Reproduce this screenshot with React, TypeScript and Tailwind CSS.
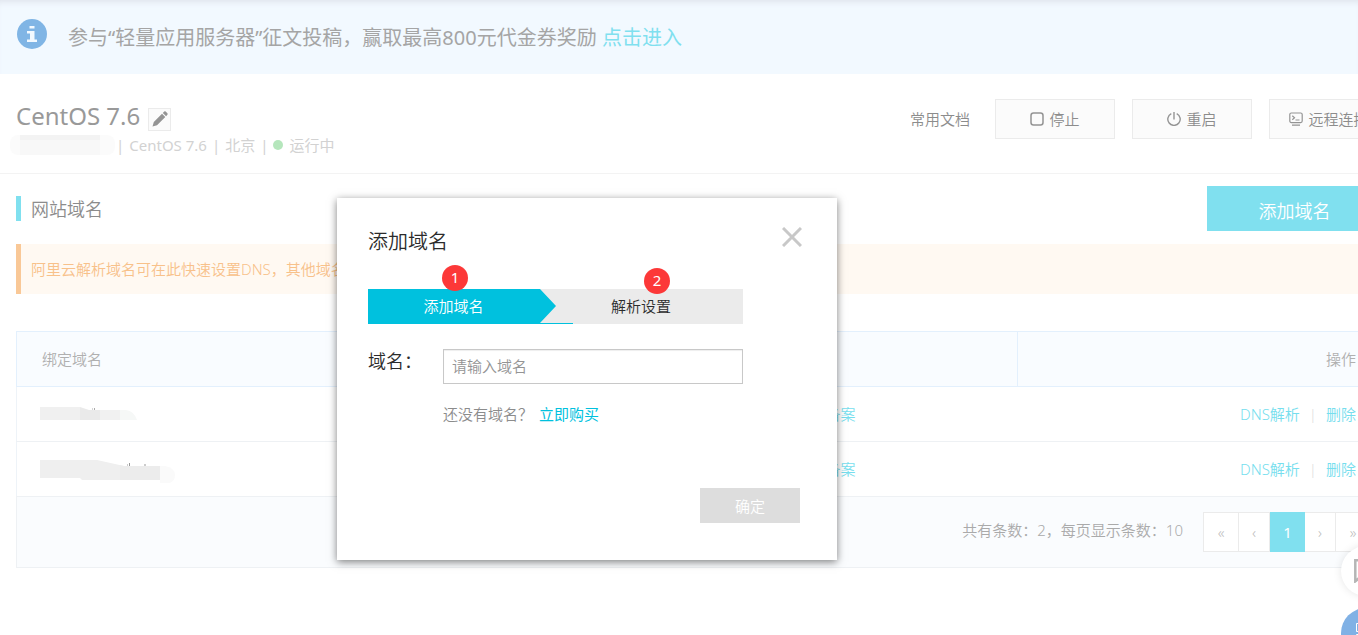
import { useState } from 'react'

// ============================================================
// Data
// ============================================================

const ROWS = [{ id: 1 }, { id: 2 }]

// ============================================================
// Icons
// ============================================================

function InfoIcon() {
  return (
    <svg width="30" height="30" viewBox="0 0 30 30" className="shrink-0" aria-hidden="true">
      <circle cx="15" cy="15" r="15" fill="#80b5e5" />
      <path d="M12.500 7h5v2.500h-5zM10 12h7.500v8.500H20V23H10v-2.500h3V14.500h-3z" fill="#f2f9ff" />
    </svg>
  )
}

function PencilIcon() {
  return (
    <svg width="16" height="16" viewBox="0 0 16 16" aria-hidden="true">
      <path d="M10 2.700 13.300 6 5 14.200.500 15.500 1.800 11zM10.800 1.900 12.200.6q.8-.6 1.500 0l1.700 1.700q.6.800 0 1.500l-1.300 1.400z" fill="#949494" />
    </svg>
  )
}

function StopIcon() {
  return (
    <svg width="14" height="14" viewBox="0 0 14 14" fill="none" aria-hidden="true">
      <rect x="1" y="1" width="12" height="12" rx="2.500" stroke="#949494" strokeWidth="1.500" />
    </svg>
  )
}

function PowerIcon() {
  return (
    <svg width="14" height="14" viewBox="0 0 14 14" fill="none" stroke="#949494" strokeWidth="1.400" aria-hidden="true">
      <path d="M7 0v7.500M4.300 1.600a6.200 6.200 0 1 0 5.400 0" />
    </svg>
  )
}

function TerminalIcon() {
  return (
    <svg width="14" height="14" viewBox="0 0 14 14" fill="none" stroke="#949494" strokeWidth="1.200" aria-hidden="true">
      <rect x=".8" y="1" width="12.400" height="9.600" rx="1.500" />
      <path d="M3.300 3.700 5.500 5.700 3.300 7.700M6.500 8h4M3 13.200h8" />
    </svg>
  )
}

function CloseIcon() {
  return (
    <svg width="20" height="20" viewBox="0 0 20 20" fill="none" stroke="#c8c8c8" strokeWidth="3" aria-hidden="true">
      <path d="M1 1 19 19M19 1 1 19" />
    </svg>
  )
}

// ============================================================
// Top banner
// ============================================================

function Banner() {
  return (
    <div className="flex h-[74px] items-center bg-[#f2f9ff] px-[17px] pb-1.5 shadow-[inset_0_6px_6px_-4px_#dfe3ec]">
      <InfoIcon />
      <p className="mt-2 ml-[21px] text-[20px] leading-7 font-normal text-[#a5a5a5]">
        参与“轻量应用服务器”征文投稿，赢取最高800元代金券奖励{' '}
        <a href="#join" className="text-[#80e0ef]">点击进入</a>
      </p>
    </div>
  )
}

// ============================================================
// Server header
// ============================================================

function ServerHeader() {
  const action =
    'flex h-10 w-[120px] items-center justify-center gap-[5px] border border-[#ebebeb] bg-[#fbfbfb] text-[#8c8c8c]'

  return (
    <header className="flex h-[100px] items-start justify-between border-b border-[#f3f3f3] pr-[17px] pl-4">
      <div className="pt-[26px]">
        <div className="flex items-center gap-2">
          <h1 className="text-[24px] leading-8 font-normal text-[#999]">CentOS 7.6</h1>
          <button aria-label="编辑名称" className="mt-1.5 flex size-[23px] items-center justify-center border border-[#ebebeb] bg-[#fbfbfb]">
            <PencilIcon />
          </button>
        </div>
        <div className="mt-px flex h-6 items-center gap-[5px] font-normal text-[#d2d2d2]">
          <svg width="105" height="20" viewBox="0 0 105 20" className="-mr-1 -ml-1.5" aria-hidden="true">
            <rect width="105" height="20" rx="8" fill="#fbfbfb" />
            <path d="M10 0h80v5H10z" fill="#f3f3f3" />
            <path d="M10 5h80v15H10z" fill="#f8f8f8" />
          </svg>
          <span>|</span>
          <span>CentOS 7.6</span>
          <span>|</span>
          <span>北京</span>
          <span>|</span>
          <span className="flex items-center gap-1.5">
            <i className="size-2.5 rounded-full bg-[#b5e6bc]" />
            运行中
          </span>
        </div>
      </div>
      <div className="flex items-center gap-[17px] pt-[25px]">
        <a href="#docs" className="mr-2 text-[#8c8c8c]">常用文档</a>
        <button className={action}>
          <StopIcon />
          停止
        </button>
        <button className={action}>
          <PowerIcon />
          重启
        </button>
        <button className={action}>
          <TerminalIcon />
          远程连接
        </button>
      </div>
    </header>
  )
}

// ============================================================
// Domain table
// ============================================================

function MaskedDomain({ id }: { id: number }) {
  if (id === 1) {
    return (
      <svg width="98" height="24" viewBox="0 0 98 24" aria-hidden="true">
        <path d="M0 5h40v13H0z" fill="#f0f0f0" />
        <path d="M40 5l9 3h11v10H40z" fill="#eaeaea" />
        <path d="M60 8h20v10H60z" fill="#f1f1f1" />
        <path d="M80 8h6q8 1 11 10H80z" fill="#f6f8f7" />
        <path d="M52 7h1M54.500 6v2" stroke="#aaa" />
      </svg>
    )
  }
  return (
    <svg width="136" height="28" viewBox="0 0 136 28" aria-hidden="true">
      <path d="M0 5h57l27 6h36v14H42l-2-2H0z" fill="#efefef" />
      <path d="M80 10l4 1h36v14H80z" fill="#ececec" />
      <path d="M120 11h5q10 2 10 9t-8 9h-7z" fill="#fafafa" />
      <path d="M87 10h1M89.500 8v3M104 10h2" stroke="#999" />
    </svg>
  )
}

function DomainTable() {
  return (
    <table className="w-full table-fixed border-collapse border border-[#eef3f8]">
      <colgroup>
        <col />
        <col className="w-[247px]" />
        <col className="w-[364px]" />
      </colgroup>
      <thead>
        <tr className="h-[55px] border border-[#e3f0fd] bg-[#f9fcff] text-[#b0b0b0]">
          <th className="pl-[25px] text-left font-[350]">绑定域名</th>
          <th className="border-r border-[#e3f0fd]" aria-label="备案" />
          <th className="pr-[25px] text-right font-[350]">操作</th>
        </tr>
      </thead>
      <tbody>
        {ROWS.map((row) => (
          <tr key={row.id} className="h-[55px] border-b border-[#eef1f4] text-[#76deee]">
            <td className="pl-[23px]">
              <MaskedDomain id={row.id} />
            </td>
            <td className="pl-[25px]">
              <a href="#beian">立即备案</a>
            </td>
            <td className="pr-[25px]">
              <div className="flex justify-end gap-[9px]">
                <a href="#dns">DNS解析</a>
                <span className="text-[#e0e0e0]">|</span>
                <a href="#remove">删除</a>
              </div>
            </td>
          </tr>
        ))}
      </tbody>
    </table>
  )
}

function Pager() {
  const cell = 'h-10 border border-[#ebebeb] bg-white text-[#bbb]'

  return (
    <div className="flex h-[71px] items-center justify-end border border-t-0 border-[#eef1f4] bg-[#fafcfe] pr-2.5">
      <span className="mr-5 pb-1 text-[#aaa]">共有条数：2，每页显示条数：10</span>
      <nav className="flex" aria-label="分页">
        <button className={`${cell} w-9`}>«</button>
        <button className={`${cell} w-[31px] border-l-0`}>‹</button>
        <button className="h-10 w-[35px] bg-[#80e0ef] font-normal text-white">1</button>
        <button className={`${cell} w-[31px] border-l-0`}>›</button>
        <button className={`${cell} w-[35px] border-l-0`}>»</button>
      </nav>
    </div>
  )
}

// ============================================================
// Add domain dialog
// ============================================================

function AddDomainDialog() {
  const [domain, setDomain] = useState('')
  const badge =
    'absolute flex size-[26px] items-center justify-center rounded-full bg-[#fc3838] pb-0.5 font-normal text-white'

  return (
    <div
      role="dialog"
      aria-labelledby="dialog-title"
      className="absolute top-[198px] left-[337px] w-[500px] bg-white pt-7 pr-[37px] pb-[37px] pl-[31px] text-[#2b2b2b] shadow-[0_2px_8px_rgba(0,0,0,0.5)]"
    >
      <div className="flex items-center justify-between">
        <h2 id="dialog-title" className="text-[20px] leading-8">添加域名</h2>
        <button aria-label="关闭" className="-mr-0.5 mb-2.5">
          <CloseIcon />
        </button>
      </div>

      <div className="relative mt-[31px] flex h-[35px] w-[375px] leading-[35px]">
        <div className="w-[171px] bg-[#00c1de] text-center text-white">添加域名</div>
        <div className="flex-1 bg-[#ebebeb] text-center">解析设置</div>
        <svg width="34" height="35" viewBox="0 0 34 35" className="absolute top-0 left-[171px]" aria-hidden="true">
          <path d="M0 0h1l16 17L1 34h33v1H0z" fill="#00c1de" />
        </svg>
        <span className={`${badge} -top-6 left-[74px]`}>1</span>
        <span className={`${badge} -top-[21px] left-[276px]`}>2</span>
      </div>

      <div className="mt-[25px] flex">
        <label htmlFor="domain" className="w-[75px] text-[18px] leading-6">域名：</label>
        <div>
          <input
            id="domain"
            value={domain}
            onChange={(e) => setDomain(e.target.value)}
            placeholder="请输入域名"
            className="h-[35px] w-[300px] border border-[#c8c8c8] px-2 pb-0.5 shadow-[inset_0_1px_1px_rgba(0,0,0,0.07)] outline-none placeholder:text-[#949494]"
          />
          <p className="mt-[19px] leading-[22px] text-[#8c8c8c]">
            还没有域名？
            <a href="#buy" className="ml-1.5 font-normal text-[#00c1de]">立即购买</a>
          </p>
        </div>
      </div>

      <div className="mt-[63px] flex justify-end">
        <button disabled className="h-[35px] w-[100px] bg-[#ddd] text-white">确定</button>
      </div>
    </div>
  )
}

// ============================================================
// Floating shortcuts
// ============================================================

function FloatingButtons() {
  return (
    <div className="absolute top-[546px] -right-[33px] flex flex-col gap-3">
      <button aria-label="反馈" className="flex size-[50px] items-center rounded-full bg-white pl-[13px] shadow-[0_0_8px_rgba(0,0,0,0.1)]">
        <svg width="24" height="24" viewBox="0 0 24 24" fill="none" stroke="#b5b5b5" strokeWidth="2.500" aria-hidden="true">
          <path d="M1.300 1.300h21v17H6l-4.700 4z" />
        </svg>
      </button>
      <button aria-label="应用" className="flex size-[50px] items-center rounded-full bg-[#80b1e5] pl-[15px]">
        <svg width="20" height="20" viewBox="0 0 20 20" fill="none" stroke="#fff" aria-hidden="true">
          <path d="M.5.500h8v8h-8zM11.500.500h8v8h-8zM.5 11.500h8v8h-8zM11.500 11.500h8v8h-8z" />
        </svg>
      </button>
    </div>
  )
}

// ============================================================
// Page
// ============================================================

export default function App() {
  return (
    <div className="relative min-h-screen overflow-hidden bg-white font-['Noto_Sans','Noto_Sans_CJK_SC',sans-serif] text-[15px] leading-[22px] font-[350]">
      <Banner />
      {/* Content runs wider than the window, like the console's fixed min width */}
      <div className="-mr-12">
        <ServerHeader />
        <main className="pt-3 pr-6 pl-4">
          <div className="flex items-center justify-between">
            <h2 className="border-l-5 border-[#80e0ef] pt-px pl-2.5 text-[18px] leading-6 text-[#8c8c8c]">网站域名</h2>
            <button className="h-[45px] w-[175px] bg-[#80e0ef] pt-1 text-[18px] text-white">添加域名</button>
          </div>
          <p className="mt-[13px] mb-[37px] border-l-5 border-[#f9c897] bg-[#fff9f2] pl-2.5 leading-[50px] text-[#f8c18a]">
            阿里云解析域名可在此快速设置DNS，其他域名
          </p>
          <DomainTable />
          <Pager />
        </main>
      </div>
      <FloatingButtons />
      <AddDomainDialog />
    </div>
  )
}
